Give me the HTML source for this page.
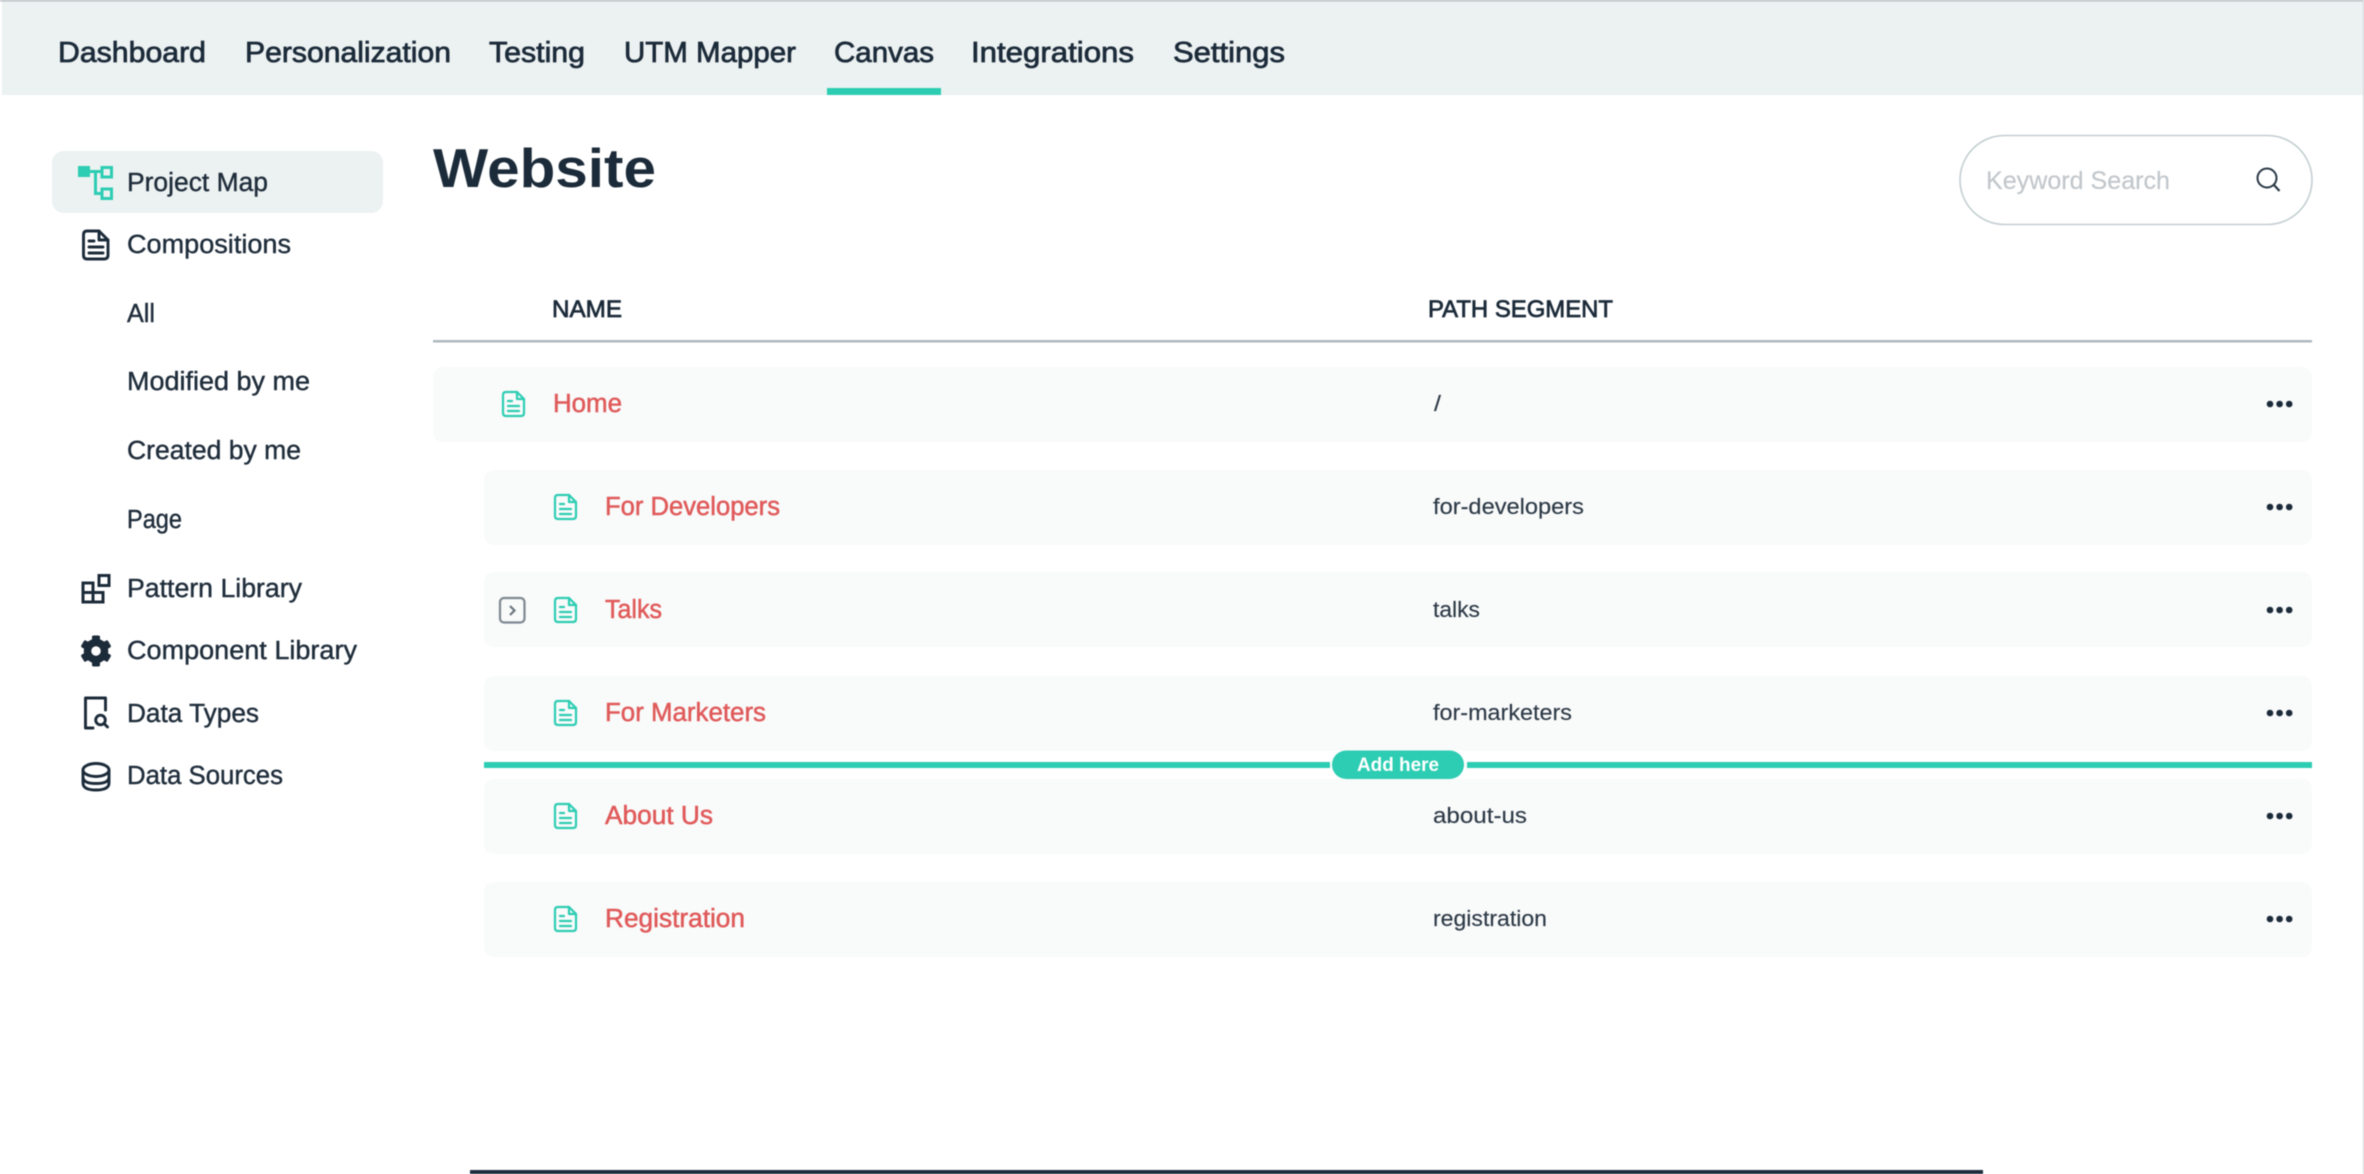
<!DOCTYPE html>
<html lang="en">
<head>
<meta charset="utf-8">
<title>Website - Project Map</title>
<style>
html,body{margin:0;padding:0;width:2364px;height:1174px;background:#fff;overflow:hidden}
svg{display:block;position:absolute;left:0;top:0;filter:blur(.5px)}
text{font-family:"Liberation Sans",sans-serif}
.nav{font-size:29px;fill:#1c2b3a;stroke:#1c2b3a;stroke-width:.75}
.side{font-size:25.5px;fill:#1f2d3b;stroke:#1f2d3b;stroke-width:.4}
.th{font-size:24px;fill:#1c2b3a;stroke:#1c2b3a;stroke-width:.75}
.nm{font-size:25.5px;fill:#e05a5a;stroke:#e05a5a;stroke-width:.5}
.pt{font-size:22px;fill:#2c3946;stroke:#2c3946;stroke-width:.15}
.doc{fill:none;stroke:#2dcdb3;stroke-width:2.2;stroke-linejoin:round;stroke-linecap:round}
.ik{fill:none;stroke:#1c2b3a;stroke-width:2.9;stroke-linejoin:round;stroke-linecap:round}
</style>
</head>
<body>
<svg width="2364" height="1174" viewBox="0 0 2364 1174" xmlns="http://www.w3.org/2000/svg">
<defs>
  <g id="d">
    <path class="doc" d="M3 0H14L21 7V21Q21 24 18 24H3Q0 24 0 21V3Q0 0 3 0Z"/>
    <path class="doc" d="M14 0V7H21"/>
    <path class="doc" d="M5 9H9M5 14H16M5 19H16"/>
  </g>
  <g id="dots" fill="#1c2b3a">
    <circle cx="0" cy="0" r="3.3"/><circle cx="9.6" cy="0" r="3.3"/><circle cx="19.2" cy="0" r="3.3"/>
  </g>
</defs>

<rect width="2364" height="1174" fill="#fff"/>

<!-- top nav -->
<rect x="2" y="0" width="2361" height="95" fill="#ecf1f1"/>
<rect x="0" y="0" width="2364" height="1.5" fill="#b9c1c5"/>
<rect x="2363" y="0" width="1" height="1174" fill="#cdd2d5"/>
<rect x="827" y="88" width="114" height="7" fill="#2dcdb3"/>
<text class="nav" x="58" y="62" textLength="148" lengthAdjust="spacingAndGlyphs">Dashboard</text>
<text class="nav" x="245" y="62" textLength="206" lengthAdjust="spacingAndGlyphs">Personalization</text>
<text class="nav" x="489" y="62" textLength="96" lengthAdjust="spacingAndGlyphs">Testing</text>
<text class="nav" x="624" y="62" textLength="172" lengthAdjust="spacingAndGlyphs">UTM Mapper</text>
<text class="nav" x="834" y="62" textLength="100" lengthAdjust="spacingAndGlyphs">Canvas</text>
<text class="nav" x="971" y="62" textLength="163" lengthAdjust="spacingAndGlyphs">Integrations</text>
<text class="nav" x="1173" y="62" textLength="112" lengthAdjust="spacingAndGlyphs">Settings</text>

<!-- sidebar -->
<rect x="52" y="151" width="331" height="62" rx="12" fill="#ecf1f1"/>
<g fill="none" stroke="#2dcdb3" stroke-width="3">
  <rect x="78" y="166" width="12" height="11" fill="#2dcdb3" stroke="none"/>
  <rect x="102" y="167.500" width="9.500" height="9.500"/>
  <rect x="102" y="189" width="9.500" height="9.500"/>
  <path d="M90 171.500H102M95.500 171.500V193.500H102"/>
</g>
<text class="side" x="127" y="191" textLength="141" lengthAdjust="spacingAndGlyphs">Project Map</text>

<path class="ik" d="M87 231H99L108 240V255Q108 259 104 259H87Q83.500 259 83.500 255V235Q83.500 231 87 231Z"/>
<path class="ik" d="M99 231V240H108M89 241H94M89 247H103M89 253H103"/>
<text class="side" x="127" y="253" textLength="164" lengthAdjust="spacingAndGlyphs">Compositions</text>

<text class="side" x="127" y="322" textLength="28" lengthAdjust="spacingAndGlyphs">All</text>
<text class="side" x="127" y="390" textLength="183" lengthAdjust="spacingAndGlyphs">Modified by me</text>
<text class="side" x="127" y="459" textLength="174" lengthAdjust="spacingAndGlyphs">Created by me</text>
<text class="side" x="127" y="528" textLength="55" lengthAdjust="spacingAndGlyphs">Page</text>

<g fill="none" stroke="#1c2b3a" stroke-width="3">
  <path d="M83 583H93V602H83ZM83 592.500H103V602H93M93 592.500V583"/>
  <rect x="99" y="575.500" width="10" height="10"/>
</g>
<text class="side" x="127" y="597" textLength="175" lengthAdjust="spacingAndGlyphs">Pattern Library</text>

<g transform="translate(96 651)" fill="#1c2b3a">
  <circle r="8.500" fill="none" stroke="#1c2b3a" stroke-width="7.500"/>
  <rect x="-4" y="-15.500" width="8" height="7" rx="1.500"/>
  <rect x="-4" y="8.500" width="8" height="7" rx="1.500"/>
  <rect x="-4" y="-15.500" width="8" height="7" rx="1.500" transform="rotate(60)"/>
  <rect x="-4" y="-15.500" width="8" height="7" rx="1.500" transform="rotate(120)"/>
  <rect x="-4" y="-15.500" width="8" height="7" rx="1.500" transform="rotate(240)"/>
  <rect x="-4" y="-15.500" width="8" height="7" rx="1.500" transform="rotate(300)"/>
</g>
<text class="side" x="127" y="659" textLength="230" lengthAdjust="spacingAndGlyphs">Component Library</text>

<path class="ik" d="M105.500 710V698H85.500V728H93"/>
<circle class="ik" cx="100.500" cy="720" r="4.800"/>
<path class="ik" d="M104 723.500L107.500 727"/>
<text class="side" x="127" y="722" textLength="132" lengthAdjust="spacingAndGlyphs">Data Types</text>

<g class="ik">
  <ellipse cx="96" cy="770" rx="13" ry="6.500"/>
  <path d="M83 770V783Q83 790 96 790Q109 790 109 783V770M83 777Q83 783.500 96 783.500Q109 783.500 109 777"/>
</g>
<text class="side" x="127" y="784" textLength="156" lengthAdjust="spacingAndGlyphs">Data Sources</text>

<!-- heading -->
<text x="433" y="187" font-size="55" font-weight="700" fill="#1c2b3a" textLength="223" lengthAdjust="spacingAndGlyphs">Website</text>

<!-- search -->
<rect x="1960" y="135.500" width="352" height="89" rx="44.500" fill="#fff" stroke="#c4ced2" stroke-width="1.600"/>
<text x="1986" y="189" font-size="25" fill="#c2c7cb" stroke="#c2c7cb" stroke-width=".2" textLength="184" lengthAdjust="spacingAndGlyphs">Keyword Search</text>
<circle cx="2267" cy="178" r="9.500" fill="none" stroke="#2a3845" stroke-width="2"/>
<path d="M2274 185L2279.500 191" stroke="#2a3845" stroke-width="2.200" fill="none"/>

<!-- table head -->
<text class="th" x="552" y="317" textLength="70" lengthAdjust="spacingAndGlyphs">NAME</text>
<text class="th" x="1428" y="317" textLength="185" lengthAdjust="spacingAndGlyphs">PATH SEGMENT</text>
<rect x="433" y="340" width="1879" height="2.500" fill="#aeb8be"/>

<!-- rows -->
<g fill="#f9fafa">
  <rect x="433" y="367" width="1879" height="75" rx="10"/>
  <rect x="484" y="470" width="1828" height="75" rx="10"/>
  <rect x="484" y="572" width="1828" height="75" rx="10"/>
  <rect x="484" y="676" width="1828" height="75" rx="10"/>
  <rect x="484" y="779" width="1828" height="75" rx="10"/>
  <rect x="484" y="882" width="1828" height="75" rx="10"/>
</g>

<use href="#d" x="503" y="392"/>
<text class="nm" x="553" y="412" textLength="69" lengthAdjust="spacingAndGlyphs">Home</text>
<text class="pt" x="1434" y="411" textLength="7" lengthAdjust="spacingAndGlyphs">/</text>
<use href="#dots" x="2270" y="404"/>

<use href="#d" x="555" y="495"/>
<text class="nm" x="605" y="515" textLength="175" lengthAdjust="spacingAndGlyphs">For Developers</text>
<text class="pt" x="1433" y="514" textLength="151" lengthAdjust="spacingAndGlyphs">for-developers</text>
<use href="#dots" x="2270" y="507"/>

<rect x="500" y="598" width="24.500" height="24.500" rx="4" fill="none" stroke="#7f8992" stroke-width="2.200"/>
<path d="M510 606L514.500 610.500L510 615" fill="none" stroke="#6c7680" stroke-width="2.200"/>
<use href="#d" x="555" y="598"/>
<text class="nm" x="605" y="618" textLength="57" lengthAdjust="spacingAndGlyphs">Talks</text>
<text class="pt" x="1433" y="617" textLength="47" lengthAdjust="spacingAndGlyphs">talks</text>
<use href="#dots" x="2270" y="610"/>

<use href="#d" x="555" y="701"/>
<text class="nm" x="605" y="721" textLength="161" lengthAdjust="spacingAndGlyphs">For Marketers</text>
<text class="pt" x="1433" y="720" textLength="139" lengthAdjust="spacingAndGlyphs">for-marketers</text>
<use href="#dots" x="2270" y="713"/>

<use href="#d" x="555" y="804"/>
<text class="nm" x="605" y="824" textLength="108" lengthAdjust="spacingAndGlyphs">About Us</text>
<text class="pt" x="1433" y="823" textLength="94" lengthAdjust="spacingAndGlyphs">about-us</text>
<use href="#dots" x="2270" y="816"/>

<use href="#d" x="555" y="907"/>
<text class="nm" x="605" y="927" textLength="140" lengthAdjust="spacingAndGlyphs">Registration</text>
<text class="pt" x="1433" y="926" textLength="114" lengthAdjust="spacingAndGlyphs">registration</text>
<use href="#dots" x="2270" y="919"/>

<!-- drop line -->
<rect x="484" y="762" width="846" height="6" fill="#2dcdb3"/>
<rect x="1467" y="762" width="845" height="6" fill="#2dcdb3"/>
<rect x="1332" y="750.500" width="132" height="28.500" rx="14.200" fill="#2dcdb3"/>
<text x="1357" y="771" font-size="19" font-weight="700" fill="#fff" textLength="82" lengthAdjust="spacingAndGlyphs">Add here</text>

<!-- bottom bar -->
<rect x="470" y="1170" width="1513" height="4" fill="#1e2d3d"/>
</svg>
</body>
</html>
